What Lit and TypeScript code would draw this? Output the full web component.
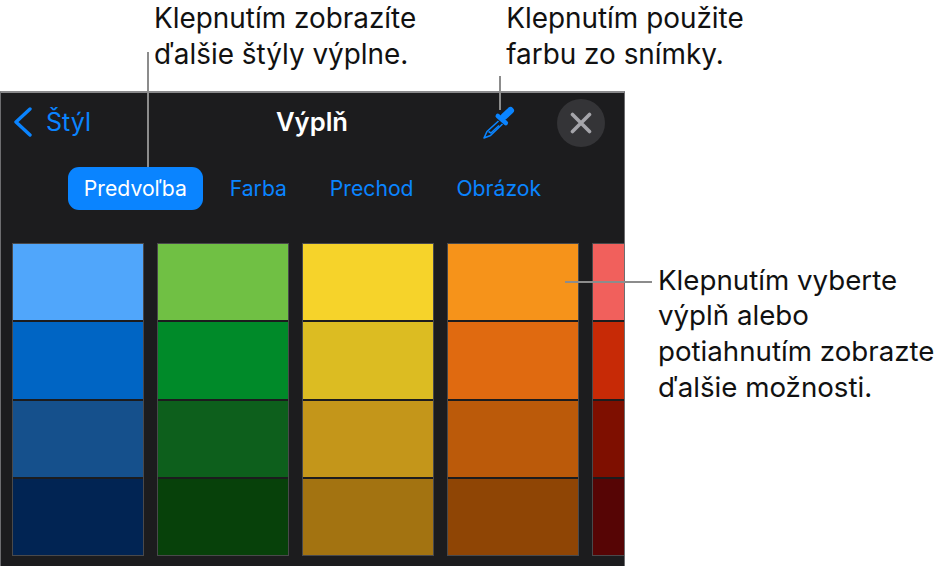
import { LitElement, html, css, svg } from 'lit';
import { customElement } from 'lit/decorators.js';

const SWATCHES = [
    ['#50a6fb', '#0065c4', '#15508c', '#012453'],
    ['#70c044', '#008a29', '#0d5f1c', '#07410a'],
    ['#f6d32a', '#dcbc22', '#c4961a', '#a37311'],
    ['#f6931a', '#e06a10', '#bb5a0a', '#8f4505'],
    ['#f1605c', '#c72a06', '#7e0f00', '#560505'],
];

const TABS = ['Predvoľba', 'Farba', 'Prechod', 'Obrázok'];

const dropper = svg`
    <path d="M21 10.5 L27.5 4.5" stroke="#0a84ff" stroke-width="7" stroke-linecap="round"/>
    <path d="M14.8 10 L22.8 17" stroke="#0a84ff" stroke-width="4.6" stroke-linecap="round"/>
    <path d="M15.5 15 L4 25.5 L1 32 L7.5 29.5 L19.5 18" fill="none" stroke="#0a84ff" stroke-width="1.6" stroke-linejoin="round"/>
    <path d="M5.5 25.5 L8 27 L16 19.5" fill="none" stroke="#0a84ff" stroke-width="1.6" stroke-linejoin="round"/>
`;

@customElement('app-root')
export class AppRoot extends LitElement {
    static styles = css`
        :host {
            display: block;
            position: relative;
            width: 945px;
            height: 566px;
            overflow: hidden;
            background: #fff;
            font-family: Inter, 'Liberation Sans', sans-serif;
        }

        .captions {
            display: flex;
            height: 91px;
            box-sizing: border-box;
            padding: 1px 0 0 154px;
            gap: 90px;
        }

        .caption {
            font-size: 27.9px;
            line-height: 35.5px;
            color: #111;
            white-space: nowrap;
        }

        .main {
            display: flex;
        }

        .panel {
            box-sizing: border-box;
            width: 625px;
            height: 475px;
            flex: none;
            overflow: hidden;
            background: #1c1c1e;
            border-top: 2px solid #8a8a8c;
            border-left: 1px solid #6d6d70;
            border-right: 1px solid #6d6d70;
        }

        .nav {
            display: grid;
            grid-template-columns: 1fr auto 1fr;
            align-items: center;
            height: 60px;
            padding: 0 19px 0 12px;
        }

        .back {
            display: flex;
            align-items: center;
            gap: 14px;
            color: #0a84ff;
            font-size: 25px;
            margin-top: -3px;
        }

        .title {
            color: #fff;
            font-size: 25.6px;
            font-weight: 600;
            padding-left: 6px;
            margin-top: -3px;
        }

        .actions {
            display: flex;
            justify-content: flex-end;
            align-items: center;
            gap: 42px;
        }

        .close {
            width: 48px;
            height: 48px;
            border-radius: 50%;
            background: #343437;
            display: flex;
            align-items: center;
            justify-content: center;
        }

        .tabs {
            display: flex;
            justify-content: center;
            align-items: center;
            gap: 10.8px;
            margin-top: 14px;
        }

        .tab {
            padding: 0 16px;
            height: 43px;
            line-height: 43px;
            border-radius: 11px;
            color: #0a84ff;
            font-size: 21.2px;
        }

        .tab.active {
            background: #0a84ff;
            color: #fff;
        }

        .swatches {
            display: flex;
            gap: 13px;
            margin-top: 33px;
            padding-left: 11px;
        }

        .column {
            flex: none;
            box-sizing: border-box;
            width: 132px;
            border: 1px solid rgba(255, 255, 255, 0.2);
            display: flex;
            flex-direction: column;
            gap: 2px;
            background: #1c1c1e;
        }

        .swatch {
            height: 76.25px;
        }

        .side {
            padding: 171.5px 0 0 33px;
            font-size: 27.7px;
            line-height: 35.7px;
            color: #111;
            white-space: nowrap;
        }

        .leader {
            position: absolute;
            background: #8c8c8c;
        }

        .leader.fill {
            left: 147px;
            top: 52px;
            width: 2px;
            height: 115px;
        }

        .leader.drop {
            left: 499px;
            top: 76px;
            width: 2px;
            height: 34px;
        }

        .leader.swatch-line {
            left: 565px;
            top: 281px;
            width: 87px;
            height: 2px;
        }
    `;

    render() {
        return html`
            <div class="captions">
                <div class="caption">Klepnutím zobrazíte<br />ďalšie štýly výplne.</div>
                <div class="caption">Klepnutím použite<br />farbu zo snímky.</div>
            </div>
            <div class="main">
                <div class="panel">
                    <div class="nav">
                        <div class="back">
                            <svg width="19" height="32" viewBox="0 0 19 32">
                                <path d="M17 3 L3 16 L17 29" fill="none" stroke="#0a84ff" stroke-width="3.4" stroke-linecap="round" stroke-linejoin="round" />
                            </svg>
                            <span>Štýl</span>
                        </div>
                        <div class="title">Výplň</div>
                        <div class="actions">
                            <svg width="32" height="34" viewBox="0 0 32 34">${dropper}</svg>
                            <div class="close">
                                <svg width="22" height="22" viewBox="0 0 22 22">
                                    <path d="M2.5 2.5 L19.5 19.5 M19.5 2.5 L2.5 19.5" stroke="#a5a5aa" stroke-width="3.6" stroke-linecap="round" />
                                </svg>
                            </div>
                        </div>
                    </div>
                    <div class="tabs">
                        ${TABS.map((t, i) => html`<div class="tab ${i === 0 ? 'active' : ''}">${t}</div>`)}
                    </div>
                    <div class="swatches">
                        ${SWATCHES.map(
                            (col) => html`
                                <div class="column">
                                    ${col.map((c) => html`<div class="swatch" style="background:${c}"></div>`)}
                                </div>
                            `
                        )}
                    </div>
                </div>
                <div class="side">Klepnutím vyberte<br />výplň alebo<br />potiahnutím zobrazte<br />ďalšie možnosti.</div>
            </div>
            <div class="leader fill"></div>
            <div class="leader drop"></div>
            <div class="leader swatch-line"></div>
        `;
    }
}
